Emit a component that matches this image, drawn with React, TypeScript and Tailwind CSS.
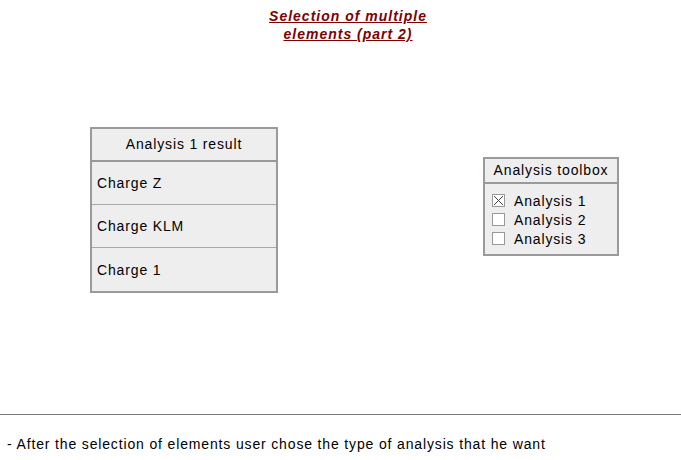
const rows = ["Charge Z", "Charge KLM", "Charge 1"];
const tools = [
  { label: "Analysis 1", checked: true },
  { label: "Analysis 2", checked: false },
  { label: "Analysis 3", checked: false },
];

function Checkbox({ checked }: { checked: boolean }) {
  return (
    <svg width="13" height="13" viewBox="0 0 13 13" className="shrink-0">
      <rect x="0.5" y="0.5" width="12" height="12" fill="#fff" stroke="#999" />
      {checked && (
        <path d="M2 2 L11 11 M11 2 L2 11" stroke="#444" strokeWidth="1" />
      )}
    </svg>
  );
}

export default function App() {
  return (
    <div
      className="w-[681px] h-[460px] bg-white flex flex-col text-[#000] tracking-[0.85px]"
      style={{ fontFamily: '"Liberation Sans", Arial, sans-serif' }}
    >
      <div className="pt-[7px] flex justify-center">
        <div className="ml-[15px] text-center text-[14px] leading-[18px] font-bold italic underline text-[#800000] tracking-[1px]">
          Selection of multiple
          <br />
          elements (part 2)
        </div>
      </div>

      <div className="flex items-start mt-[84px] h-[254px]">
        <div className="ml-[90px] w-[188px] border-2 border-[#9a9a9a] bg-[#eeeeee]">
          <div className="h-[33px] flex items-center justify-center text-[14px] border-b-2 border-[#9a9a9a]">
            Analysis 1 result
          </div>
          {rows.map((r, i) => (
            <div
              key={r}
              className={
                "h-[43px] flex items-center pl-[5px] pt-[1px] text-[14px] " +
                (i < rows.length - 1 ? "border-b border-[#a8a8a8]" : "")
              }
            >
              {r}
            </div>
          ))}
        </div>

        <div className="ml-[205px] mt-[30px] w-[136px] border-2 border-[#9a9a9a] bg-[#eeeeee]">
          <div className="h-[25px] flex items-center justify-center text-[14px] border-b-2 border-[#9a9a9a]">
            Analysis toolbox
          </div>
          <div className="flex flex-col pt-[7px] pb-[6px] pl-[7px]">
            {tools.map((t) => (
              <div key={t.label} className="flex items-center h-[19px] gap-[9px] text-[14px]">
                <Checkbox checked={t.checked} />
                <span className="pt-[1px]">{t.label}</span>
              </div>
            ))}
          </div>
        </div>
      </div>

      <div className="mt-[33px] border-t border-[#777]" />
      <div className="pl-[7px] pt-[21px] text-[14px] leading-[16px]">
        - After the selection of elements user chose the type of analysis that he want
      </div>
    </div>
  );
}
